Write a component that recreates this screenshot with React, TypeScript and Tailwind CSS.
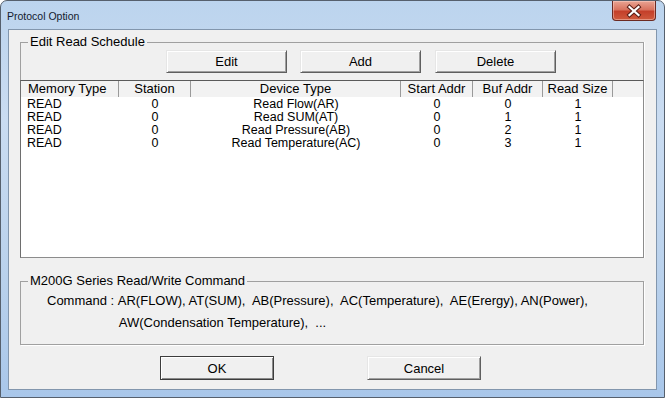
import React from "react";

const cols = "grid grid-cols-[98px_72px_210px_72px_70px_70px_1fr]";

const rows = [
  ["READ", "0", "Read Flow(AR)", "0", "0", "1"],
  ["READ", "0", "Read SUM(AT)", "0", "1", "1"],
  ["READ", "0", "Read Pressure(AB)", "0", "2", "1"],
  ["READ", "0", "Read Temperature(AC)", "0", "3", "1"],
];

function Btn({ label, className = "", def = false }: { label: string; className?: string; def?: boolean }) {
  return (
    <div
      className={
        "flex items-center justify-center bg-[#f0f0f0] text-[13px] leading-none text-black " +
        (def
          ? "border border-[#3c3c3c] shadow-[inset_1px_1px_0_#ffffff,inset_-1px_-1px_0_#8a8a8a] "
          : "border border-t-[#e6e6e6] border-l-[#e6e6e6] border-r-[#5f5f5f] border-b-[#5f5f5f] shadow-[inset_1px_1px_0_#ffffff,inset_-1px_-1px_0_#a0a0a0] ") +
        className
      }
    >
      {label}
    </div>
  );
}

export default function App() {
  return (
    <div className="w-[665px] h-[398px] flex flex-col border border-[#56606d] rounded-t-[7px] overflow-hidden bg-[linear-gradient(to_bottom,#bcd4ee_0%,#cadcf1_30%,#b9d1ec_70%,#a9c7ea_100%)] font-['Liberation_Sans',Arial,sans-serif] text-black">
      {/* title bar */}
      <div className="h-[28px] flex items-start justify-between">
        <div className="pl-[6px] pt-[9px] text-[10.5px] leading-[12px] text-[#14202e]">
          Protocol Option
        </div>
        <div className="mr-[8px] w-[44px] h-[20px] rounded-b-[4px] border border-t-0 border-[#6b2a22] bg-[linear-gradient(to_bottom,#e9a493_0%,#d9735f_45%,#c4402a_55%,#cf5a3d_100%)] flex items-center justify-center shadow-[inset_0_0_0_1px_rgba(255,220,210,0.45)]">
          <svg width="16" height="14" viewBox="0 0 16 14">
            <path d="M3.5 3 L12.5 11 M12.5 3 L3.5 11" stroke="#5a1e16" strokeWidth="4.2" strokeLinecap="square" />
            <path d="M3.5 3 L12.5 11 M12.5 3 L3.5 11" stroke="#ffffff" strokeWidth="2.2" strokeLinecap="square" />
          </svg>
        </div>
      </div>

      {/* client */}
      <div className="mx-[7px] mb-[7px] flex-1 border border-[#8296ad] bg-[#f0f0f0] flex flex-col">
        {/* Edit Read Schedule group */}
        <fieldset className="mt-[5px] ml-[11px] mr-[12px] border border-b-0 border-[#a0a0a0] shadow-[1px_0_0_#ffffff]">
          <legend className="ml-[7px] px-[2px] text-[13px] leading-[14px]">Edit Read Schedule</legend>
          <div className="flex mt-[1px] ml-[145px] h-[23px]">
            <Btn label="Edit" className="w-[121px]" />
            <Btn label="Add" className="w-[121px] ml-[13px]" />
            <Btn label="Delete" className="w-[121px] ml-[14px]" />
          </div>
          <div className="mt-[7px] -mx-px h-[178px] bg-white border border-[#8c8c8c] border-t-[#5a5a5a] border-l-[#6e6e6e]">
            <div className={cols + " h-[16px] bg-[#f2f2f2] text-[13px] leading-[15px]"}>
              <div className="pl-[7px] border-r border-[#9a9a9a]">Memory Type</div>
              <div className="text-center border-r border-[#9a9a9a]">Station</div>
              <div className="text-center border-r border-[#9a9a9a]">Device Type</div>
              <div className="text-center border-r border-[#9a9a9a]">Start Addr</div>
              <div className="text-center border-r border-[#9a9a9a]">Buf Addr</div>
              <div className="text-center border-r border-[#9a9a9a]">Read Size</div>
              <div />
            </div>
            <div className="pt-[1px]">
              {rows.map((r, i) => (
                <div key={i} className={cols + " h-[13px] text-[12.5px] leading-[13px]"}>
                  <div className="pl-[6px]">{r[0]}</div>
                  <div className="text-center">{r[1]}</div>
                  <div className="text-center">{r[2]}</div>
                  <div className="text-center">{r[3]}</div>
                  <div className="text-center">{r[4]}</div>
                  <div className="text-center">{r[5]}</div>
                  <div />
                </div>
              ))}
            </div>
          </div>
        </fieldset>

        {/* M200G group */}
        <fieldset className="mt-[16px] ml-[11px] mr-[12px] border border-[#a0a0a0] shadow-[1px_1px_0_#ffffff]">
          <legend className="ml-[7px] px-[2px] text-[13px] leading-[14px]">M200G Series Read/Write Command</legend>
          <div className="flex pt-[2px] pb-[10px] pl-[26px] text-[13px] leading-[22px] whitespace-pre">
            <div>Command : </div>
            <div className="flex flex-col">
              <div>AR(FLOW), AT(SUM),  AB(Pressure),  AC(Temperature),  AE(Erergy), AN(Power),</div>
              <div className="pl-[1px]">AW(Condensation Temperature),  ...</div>
            </div>
          </div>
        </fieldset>

        <div className="flex mt-[11px] ml-[151px] h-[24px]">
          <Btn label="OK" className="w-[114px]" def />
          <Btn label="Cancel" className="w-[114px] ml-[93px]" />
        </div>
      </div>
    </div>
  );
}
